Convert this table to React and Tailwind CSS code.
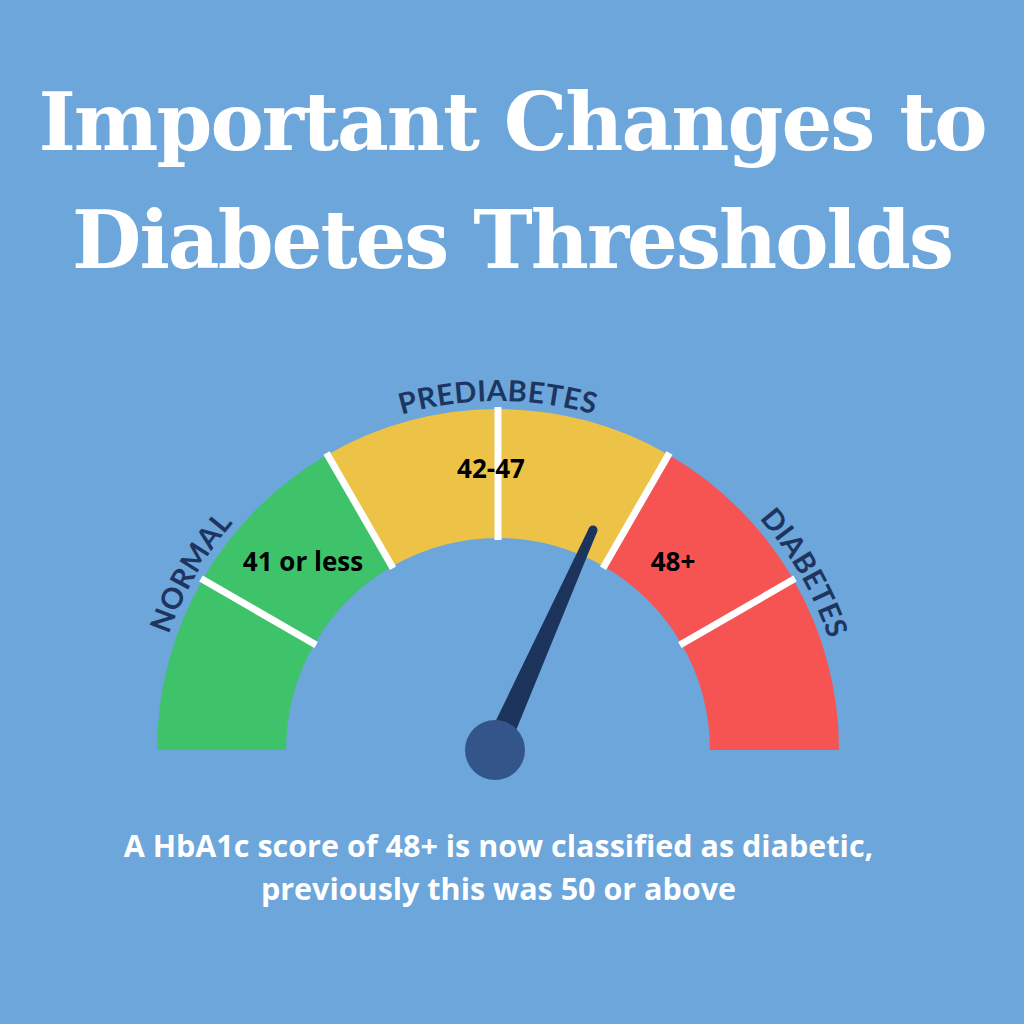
import React from "react";

const CX = 498;
const CY = 750;
const R_OUT = 341;
const R_IN = 212;
const R_TEXT = 349;

// point on the dial, angle in degrees (0 = right, 90 = up)
const pt = (deg, r) => {
  const a = (deg * Math.PI) / 180;
  return [CX + r * Math.cos(a), CY - r * Math.sin(a)];
};

const sector = (from, to) => {
  const [x1, y1] = pt(from, R_OUT);
  const [x2, y2] = pt(to, R_OUT);
  const [x3, y3] = pt(to, R_IN);
  const [x4, y4] = pt(from, R_IN);
  return `M${x1} ${y1} A${R_OUT} ${R_OUT} 0 0 1 ${x2} ${y2} L${x3} ${y3} A${R_IN} ${R_IN} 0 0 0 ${x4} ${y4} Z`;
};

const segments = [
  { from: 180, to: 120, fill: "#3ec36b" },
  { from: 120, to: 60, fill: "#ecc247" },
  { from: 60, to: 0, fill: "#f65353" },
];

const dividers = [150, 120, 90, 60, 30];

function Needle() {
  const base = [495, 750];
  const tip = [593, 530];
  const dx = tip[0] - base[0];
  const dy = tip[1] - base[1];
  const len = Math.hypot(dx, dy);
  const nx = -dy / len;
  const ny = dx / len;
  const wb = 12;
  const wt = 4.5;
  const d = `M${base[0] + nx * wb} ${base[1] + ny * wb} L${tip[0] + nx * wt} ${tip[1] + ny * wt} L${tip[0] - nx * wt} ${tip[1] - ny * wt} L${base[0] - nx * wb} ${base[1] - ny * wb} Z`;
  return (
    <g>
      <path d={d} fill="#1c335c" />
      <circle cx={tip[0]} cy={tip[1]} r={wt} fill="#1c335c" />
      <circle cx={base[0]} cy={base[1]} r={30} fill="#34558a" />
    </g>
  );
}

function Gauge() {
  const [sx, sy] = pt(180, R_TEXT);
  const [ex, ey] = pt(0, R_TEXT);
  const arc = `M${sx} ${sy} A${R_TEXT} ${R_TEXT} 0 0 1 ${ex} ${ey}`;
  const curved = [
    { label: "NORMAL", offset: "16.67%" },
    { label: "PREDIABETES", offset: "50%" },
    { label: "DIABETES", offset: "83.33%" },
  ];

  return (
    <svg
      className="block"
      width="1024"
      height="430"
      viewBox="0 360 1024 430"
    >
      <defs>
        <path id="label-arc" d={arc} />
      </defs>
      {segments.map((s) => (
        <path key={s.from} d={sector(s.from, s.to)} fill={s.fill} />
      ))}
      {dividers.map((deg) => {
        const [x1, y1] = pt(deg, R_IN - 2);
        const [x2, y2] = pt(deg, R_OUT + 2);
        return (
          <line
            key={deg}
            x1={x1}
            y1={y1}
            x2={x2}
            y2={y2}
            stroke="#ffffff"
            strokeWidth="7"
          />
        );
      })}
      {curved.map((c) => (
        <text
          key={c.label}
          fill="#1e3560"
          fontFamily="Lato, 'Open Sans', sans-serif"
          fontWeight="700"
          fontSize="29"
          letterSpacing="0.5"
        >
          <textPath href="#label-arc" startOffset={c.offset} textAnchor="middle">
            {c.label}
          </textPath>
        </text>
      ))}
      <g
        fill="#000000"
        fontFamily="'Open Sans', sans-serif"
        fontWeight="700"
        fontSize="26"
        textAnchor="middle"
      >
        <text x="303" y="571">41 or less</text>
        <text x="491" y="478">42-47</text>
        <text x="673" y="571">48+</text>
      </g>
      <Needle />
    </svg>
  );
}

export default function App() {
  return (
    <div className="w-[1024px] h-[1024px] bg-[#6ca6da] flex flex-col items-center overflow-hidden">
      <h1 className="mt-[63px] text-center text-white font-bold text-[80px] leading-[118px] tracking-[-2px] font-['DejaVu_Serif',serif]">
        Important Changes to
        <br />
        Diabetes Thresholds
      </h1>
      <div className="mt-[61px]">
        <Gauge />
      </div>
      <p className="mt-[34px] w-full pr-[27px] text-center text-white font-bold text-[30.5px] leading-[43px] font-['Open_Sans',sans-serif]">
        A HbA1c score of 48+ is now classified as diabetic,
        <br />
        previously this was 50 or above
      </p>
    </div>
  );
}
